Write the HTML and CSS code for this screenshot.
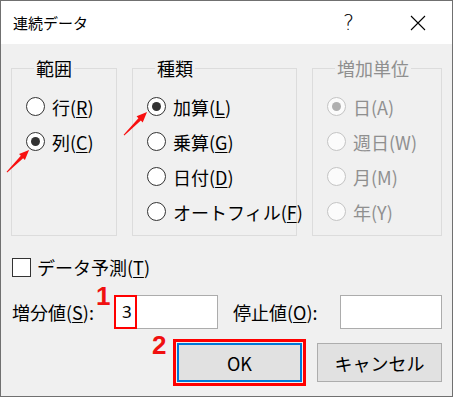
FILE: index.html
```html
<!DOCTYPE html>
<html lang="ja">
<head>
<meta charset="utf-8">
<title>連続データ</title>
<link rel="stylesheet" href="styles.css">
</head>
<body>
<div class="dialog">
  <div class="titlebar">
    <span class="title">連続データ</span>
    <span class="tbtn help">?</span>
    <span class="tbtn close">
      <svg width="16" height="16" viewBox="0 0 16 16"><path d="M1 1 L15 15 M15 1 L1 15" stroke="#000" stroke-width="1.1" fill="none"/></svg>
    </span>
  </div>
  <div class="body">
    <div class="groups">
      <fieldset class="group g1">
        <legend>範囲</legend>
        <div class="radio"><span class="rb"></span><span>行(<u>R</u>)</span></div>
        <div class="radio"><span class="rb on"></span><span>列(<u>C</u>)</span></div>
      </fieldset>
      <fieldset class="group g2">
        <legend>種類</legend>
        <div class="radio"><span class="rb on"></span><span>加算(<u>L</u>)</span></div>
        <div class="radio"><span class="rb"></span><span>乗算(<u>G</u>)</span></div>
        <div class="radio"><span class="rb"></span><span>日付(<u>D</u>)</span></div>
        <div class="radio"><span class="rb"></span><span>オートフィル(<u>F</u>)</span></div>
      </fieldset>
      <fieldset class="group g3 disabled">
        <legend>増加単位</legend>
        <div class="radio"><span class="rb on"></span><span>日(A)</span></div>
        <div class="radio"><span class="rb"></span><span>週日(W)</span></div>
        <div class="radio"><span class="rb"></span><span>月(M)</span></div>
        <div class="radio"><span class="rb"></span><span>年(Y)</span></div>
      </fieldset>
    </div>
    <div class="check-row"><span class="cb"></span><span>データ予測(<u>T</u>)</span></div>
    <div class="input-row">
      <span class="lbl lbl1">増分値(<u>S</u>):</span>
      <span class="field f1"><span class="val">3</span><span class="mark-box"></span><span class="num n1">1</span></span>
      <span class="lbl lbl2">停止値(<u>O</u>):</span>
      <span class="field f2"></span>
    </div>
    <div class="button-row">
      <span class="btn ok">OK<span class="num n2">2</span></span>
      <span class="btn">キャンセル</span>
    </div>
    <svg class="arrow a1" viewBox="0 0 26 26"><polygon points="0.65,24.65 16.03,7.43 14.12,5.52 25,1 20.48,11.88 18.57,9.97 1.35,25.35" fill="#f81010"/></svg>
    <svg class="arrow a2" viewBox="0 0 26 26"><polygon points="0.65,24.65 16.03,7.43 14.12,5.52 25,1 20.48,11.88 18.57,9.97 1.35,25.35" fill="#f81010"/></svg>
  </div>
</div>
</body>
</html>
```
FILE: styles.css
```css
html, body {
  margin: 0;
  padding: 0;
  background: #f0f0f0;
}
body {
  font-family: "Noto Sans CJK JP", "Noto Sans", sans-serif;
  font-size: 18px;
  color: #000;
}
.dialog {
  width: 453px;
  height: 397px;
  box-sizing: border-box;
  border: 1px solid #707070;
  background: #f0f0f0;
  display: flex;
  flex-direction: column;
}
.titlebar {
  height: 43px;
  background: #fff;
  display: flex;
  align-items: center;
  flex-shrink: 0;
}
.title {
  flex: 1;
  padding-left: 12px;
  font-size: 15px;
  line-height: 43px;
}
.tbtn {
  width: 69px;
  height: 43px;
  display: flex;
  align-items: center;
  justify-content: center;
}
.help {
  font-family: "DejaVu Sans", sans-serif;
  font-size: 21px;
  font-weight: 300;
}
.close svg { display: block; }
.body {
  position: relative;
  flex: 1;
  padding: 12px 10px 0 11px;
}
.groups {
  display: flex;
  gap: 15px;
  margin-left: -1px;
}
.group {
  margin: 0;
  padding: 9px 0 6px 14px;
  border: 1px solid #dcdcdc;
  min-width: 0;
  box-sizing: border-box;
}
.g1 { width: 106px; }
.g2 { width: 165px; }
.g3 { width: 130px; }
.group legend {
  margin-left: 8px;
  padding: 0 2px;
  line-height: 24px;
}
.radio {
  height: 35px;
  display: flex;
  align-items: center;
  gap: 7px;
  white-space: nowrap;
  line-height: 24px;
}
.rb {
  width: 19px;
  height: 19px;
  box-sizing: border-box;
  border: 1px solid #333;
  border-radius: 50%;
  background: #fff;
  display: flex;
  align-items: center;
  justify-content: center;
  flex-shrink: 0;
}
.rb.on::after {
  content: "";
  width: 9px;
  height: 9px;
  border-radius: 50%;
  background: #333;
}
.disabled { color: #8f8f8f; }
.disabled .rb {
  border-color: #c4c4c4;
  background: #fbfbfb;
}
.disabled .rb.on::after { background: #b0b0b0; }
u {
  text-decoration: underline;
  text-decoration-thickness: 1px;
  text-underline-offset: 2px;
}
.check-row {
  margin-top: 16px;
  height: 30px;
  display: flex;
  align-items: center;
  gap: 6px;
  line-height: 24px;
}
.cb {
  width: 19px;
  height: 19px;
  box-sizing: border-box;
  border: 1px solid #333;
  background: #fff;
}
.input-row {
  margin-top: 13px;
  height: 34px;
  display: flex;
  align-items: center;
  line-height: 24px;
}
.lbl { white-space: nowrap; }
.lbl1 { width: 102px; }
.lbl2 { width: 107px; margin-left: 15px; }
.field {
  position: relative;
  height: 34px;
  box-sizing: border-box;
  border: 1px solid #acacac;
  background: #fff;
  display: flex;
  align-items: center;
}
.f1 { width: 104px; padding-left: 7px; }
.f2 { width: 102px; }
.val {
  font-family: "Noto Sans", sans-serif;
  font-size: 17px;
  line-height: 24px;
}
.mark-box {
  position: absolute;
  left: -1px;
  top: -1px;
  width: 23px;
  height: 34px;
  border: 2px solid #f00;
  box-sizing: border-box;
}
.num {
  position: absolute;
  color: #f01010;
  font-family: "Liberation Sans", sans-serif;
  font-weight: bold;
  font-size: 26px;
  line-height: 26px;
}
.n1 { left: -19px; top: -13px; }
.n2 { left: -27px; top: -13px; }
.button-row {
  margin-top: 14px;
  display: flex;
  justify-content: flex-end;
  gap: 15px;
}
.btn {
  position: relative;
  width: 125px;
  height: 39px;
  box-sizing: border-box;
  border: 1px solid #adadad;
  background: #e1e1e1;
  display: flex;
  align-items: center;
  justify-content: center;
  line-height: 24px;
}
.btn.ok {
  border: 2px solid #0078d7;
  outline: 3px solid #f00;
  outline-offset: 1px;
}
.arrow {
  position: absolute;
}
.a1 { left: 5px; top: 105px; width: 24px; height: 24px; }
.a2 { left: 122px; top: 67px; width: 25px; height: 25px; }
```
